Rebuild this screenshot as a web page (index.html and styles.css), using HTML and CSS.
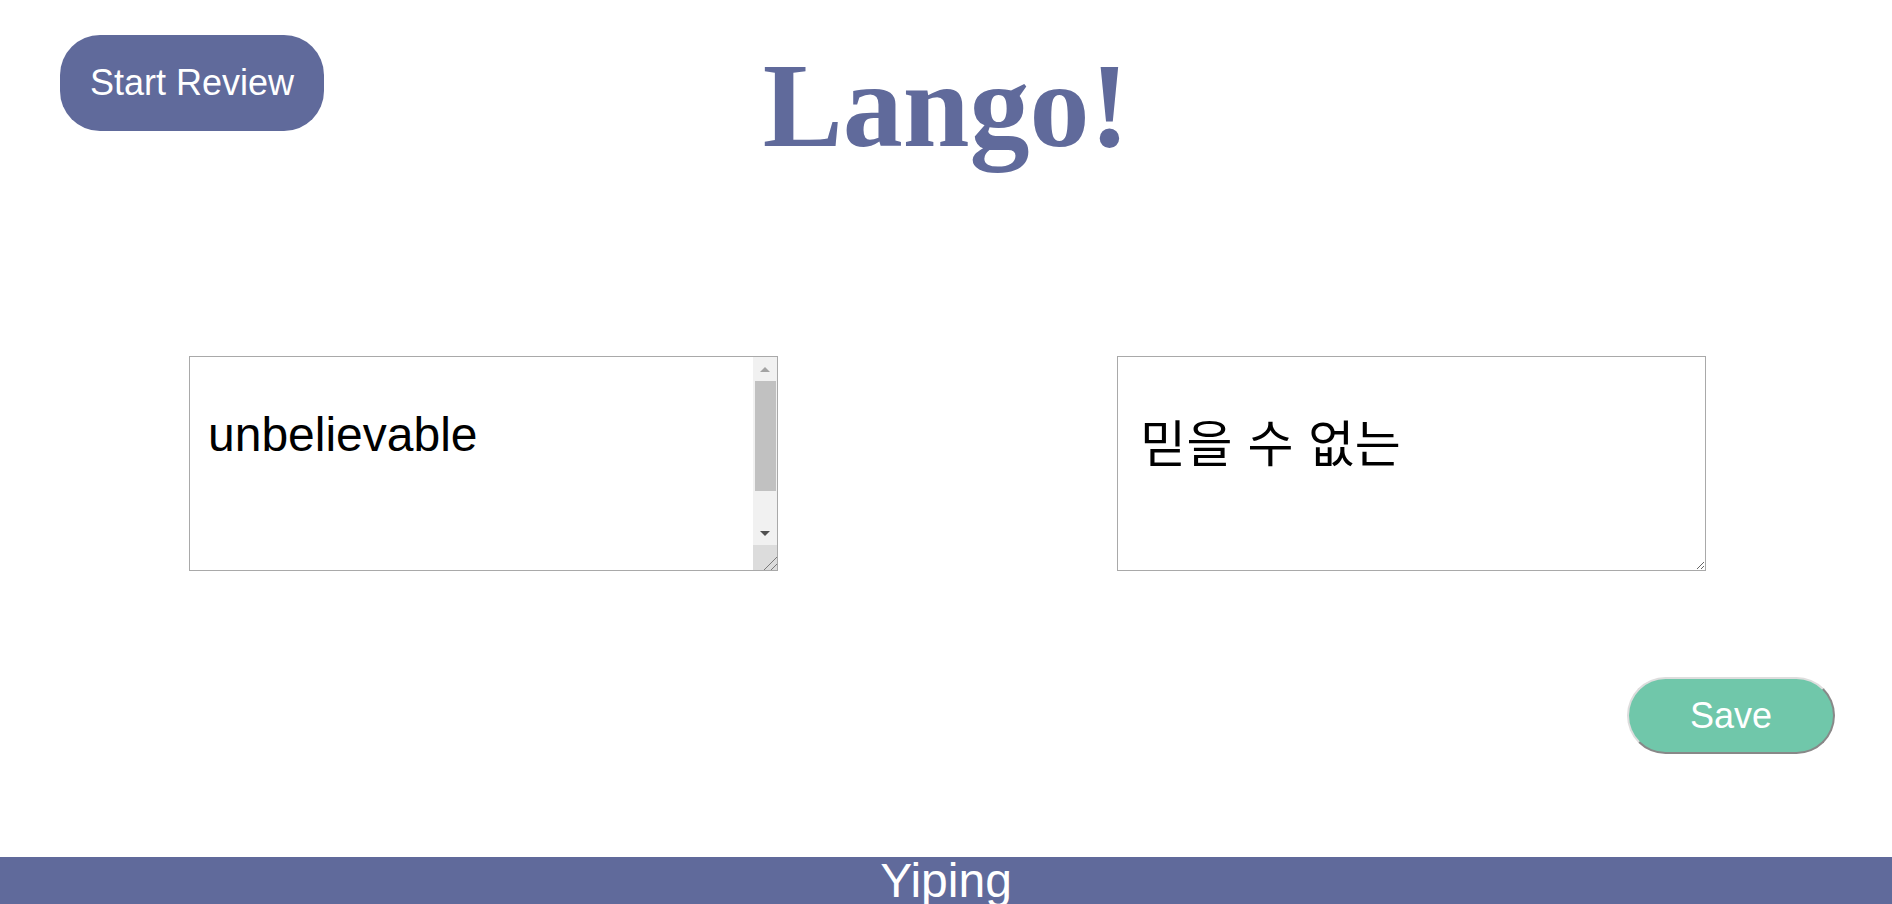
FILE: index.html
```html
<!DOCTYPE html>
<html lang="en">
<head>
<meta charset="utf-8">
<title>Lango!</title>
<link rel="stylesheet" href="styles.css">
</head>
<body>
<header class="header">
  <button class="review-btn" type="button">Start Review</button>
  <h1 class="title">Lango!</h1>
</header>
<main class="cards">
  <div class="field">
    <textarea class="card">unbelievable</textarea>
    <div class="fake-scroll" aria-hidden="true">
      <span class="sb-btn"><span class="sb-arrow-up"></span></span>
      <span class="sb-track"><span class="sb-thumb"></span></span>
      <span class="sb-btn"><span class="sb-arrow-down"></span></span>
      <span class="sb-corner"></span>
    </div>
  </div>
  <div class="field">
    <textarea class="card card-ko" lang="ko">믿을 수 없는</textarea>
  </div>
</main>
<div class="actions">
  <button class="save-btn" type="button">Save</button>
</div>
<footer class="footer">Yiping</footer>
</body>
</html>
```

FILE: styles.css
```css
html, body {
  margin: 0;
  padding: 0;
  background: #ffffff;
}

body {
  min-height: 100vh;
  display: flex;
  flex-direction: column;
  font-family: "Liberation Sans", Arial, "Noto Sans CJK KR", sans-serif;
  overflow: hidden;
}

.header {
  display: grid;
  grid-template-columns: 1fr auto 1fr;
  align-items: start;
  padding: 35px 60px 0;
}

.review-btn {
  justify-self: start;
  border: none;
  border-radius: 40px;
  background: #606a9b;
  color: #ffffff;
  font-family: "Liberation Sans", Arial, sans-serif;
  font-size: 36px;
  line-height: 42px;
  padding: 27px 30px;
  cursor: pointer;
}

.title {
  margin: 2px 0 0;
  font-family: "Liberation Serif", "Times New Roman", serif;
  font-weight: bold;
  font-size: 120px;
  line-height: 138px;
  color: #606a9b;
}

.cards {
  display: flex;
  gap: 339px;
  padding-left: 189px;
  margin-top: 181px;
}

.field {
  position: relative;
  display: flex;
}

.card {
  box-sizing: border-box;
  width: 589px;
  height: 215px;
  margin: 0;
  border: 1px solid #a9a9a9;
  padding: 50px 18px 3px;
  font-family: "Liberation Sans", Arial, "Noto Sans CJK KR", sans-serif;
  font-size: 48px;
  line-height: 55px;
  color: #000000;
  background: #ffffff;
  outline: none;
  overflow: hidden;
}

.card-ko {
  font-size: 50px;
  letter-spacing: 0.5px;
  padding: 61px 22px 3px;
}

/* decorative vertical scrollbar drawn over the first textarea */
.fake-scroll {
  position: absolute;
  top: 1px;
  right: 1px;
  bottom: 1px;
  width: 24px;
  display: flex;
  flex-direction: column;
  background: #f1f1f1;
}

.sb-btn {
  flex: none;
  height: 24px;
  display: flex;
  align-items: center;
  justify-content: center;
}

.sb-arrow-up {
  width: 0;
  height: 0;
  border-left: 5px solid transparent;
  border-right: 5px solid transparent;
  border-bottom: 5px solid #a3a3a3;
}

.sb-arrow-down {
  width: 0;
  height: 0;
  border-left: 5px solid transparent;
  border-right: 5px solid transparent;
  border-top: 5px solid #505050;
}

.sb-track {
  flex: 1;
  padding: 0 1px 0 2px;
}

.sb-thumb {
  display: block;
  height: 110px;
  background: #c1c1c1;
}

.sb-corner {
  flex: none;
  height: 25px;
  background:
    linear-gradient(135deg, transparent 0 72%, #7a7a7a 72% 75%, transparent 75% 86%, #7a7a7a 86% 89%, transparent 89%),
    #dcdcdc;
}

.actions {
  display: flex;
  justify-content: flex-end;
  padding-right: 57px;
  margin-top: 106px;
}

.save-btn {
  border-style: solid;
  border-width: 2px;
  border-color: #dddddd #888888 #888888 #dddddd;
  border-radius: 40px;
  background: #70c7aa;
  color: #ffffff;
  font-family: "Liberation Sans", Arial, sans-serif;
  font-size: 36px;
  line-height: 41px;
  padding: 16px 61px;
  cursor: pointer;
}

.footer {
  margin-top: auto;
  height: 47px;
  background: #606a9b;
  color: #ffffff;
  text-align: center;
  font-family: "Liberation Sans", Arial, sans-serif;
  font-size: 48px;
  line-height: 47px;
}
```
